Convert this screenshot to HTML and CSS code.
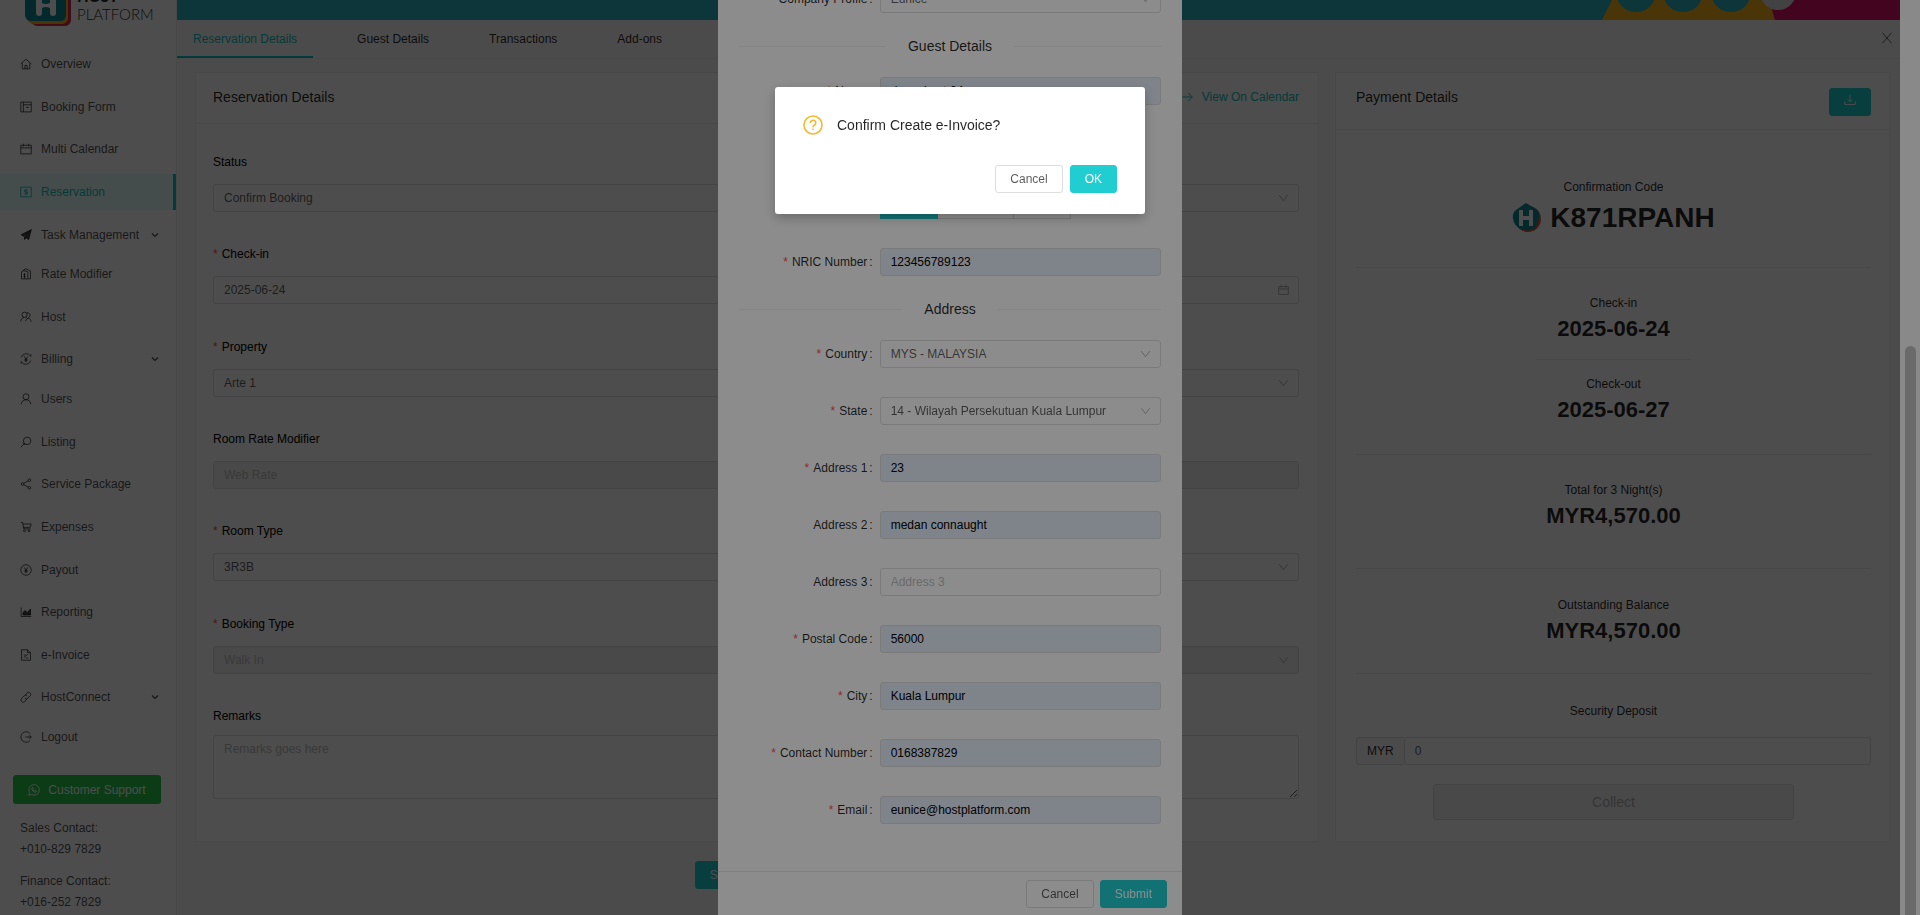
FILE: index.html
```html
<!DOCTYPE html>
<html lang="en">
<head>
  <meta charset="UTF-8">
  <title>Host Platform - Reservation</title>
  <meta name="viewport" content="width=device-width, initial-scale=1.0">
  <link rel="stylesheet" href="styles.css">
</head>
<body>

  <div class="layout">
    <aside class="sider">
      <div class="brand">
        <svg class="brand-mark" viewBox="0 0 48 28" width="48" height="28">
          <path d="M5 0h42v20a6 6 0 0 1-6 6H13a9 9 0 0 1-7-6z" fill="#e0234e"/>
          <path d="M3 0h41v18a6 6 0 0 1-6 6H10a8 8 0 0 1-7-5z" fill="#f5b21b"/>
          <path d="M1 0h41v16a5 5 0 0 1-5 5H7a6 6 0 0 1-6-6z" fill="#128a92"/>
          <path d="M12 0h6v3q4 2 8 0V0h6v13q0 3-3 3t-3-3V8q-4-2-8 0v5q0 3-3 3t-3-3z" fill="#fff"/>
        </svg>
        <div class="brand-text">
          <strong>HOST</strong>
          <span>PLATFORM</span>
        </div>
      </div>

      <ul class="menu">
        <li><a href="#"><svg class="icon" viewBox="0 0 16 16"><path d="M1 8l7-6.5L15 8M3 7v7.5h10V7M6.5 14.500V10h3v4.500"/></svg>Overview</a></li>
        <li><a href="#"><svg class="icon" viewBox="0 0 16 16"><path d="M1 1.500h14v13H1zM4.500 1.500v13M4.500 5H15M8 8.500h4"/></svg>Booking Form</a></li>
        <li><a href="#"><svg class="icon" viewBox="0 0 16 16"><path d="M1 3h14v11.500H1zM1 6.500h14M4.500 1v3.500M11.500 1v3.500"/></svg>Multi Calendar</a></li>
        <li class="active"><a href="#"><svg class="icon" viewBox="0 0 16 16"><path d="M1 1.500h14v13H1zM8 4v8M10 5.500H7a1.200 1.200 0 0 0 0 2.500h2a1.200 1.200 0 0 1 0 2.500H6"/></svg>Reservation</a></li>
        <li class="submenu"><a href="#"><svg class="icon" viewBox="0 0 16 16"><path d="M15 1L1.500 7.500l3 2zM15 1L6 10v4l2-2.500 3.500 2.500z" fill="currentColor"/></svg>Task Management<svg class="arrow" viewBox="0 0 8 8"><path d="M1 2.500l3 3 3-3"/></svg></a></li>
        <li><a href="#"><svg class="icon" viewBox="0 0 16 16"><path d="M5 4V2.500L8 1l6 3v10.500h-3M2 5l3-1.500L10.500 5v9.500H2zM4.500 8.500h3M4.500 11.500h3M6 7v7"/></svg>Rate Modifier</a></li>
        <li><a href="#"><svg class="icon" viewBox="0 0 16 16"><circle cx="6" cy="5" r="3.500"/><path d="M1 14c0-3 2-5 4.500-5.500M8 8.500l2 1.500M15 14.500c-.5-3-2-4.500-4-5-2 .5-3 2-3.500 4M9 2.500a3.300 3.300 0 0 1 2 6.500"/></svg>Host</a></li>
        <li class="submenu"><a href="#"><svg class="icon" viewBox="0 0 16 16"><path d="M1.500 6a7 7 0 0 1 12.500-2M14.500 10a7 7 0 0 1-12.500 2M14.500 1.500V5M1.500 14.500V11M5.500 4.500L8 8l2.500-3.500M8 8v4M6 8.500h4M6 10.300h4"/></svg>Billing<svg class="arrow" viewBox="0 0 8 8"><path d="M1 2.500l3 3 3-3"/></svg></a></li>
        <li><a href="#"><svg class="icon" viewBox="0 0 16 16"><circle cx="8" cy="5" r="4"/><path d="M1.500 15C2 11.500 4.500 9 8 9s6 2.500 6.500 6"/></svg>Users</a></li>
        <li><a href="#"><svg class="icon" viewBox="0 0 16 16"><circle cx="9.500" cy="6.500" r="5"/><path d="M6 10l-5 5M4 9l3 3"/></svg>Listing</a></li>
        <li><a href="#"><svg class="icon" viewBox="0 0 16 16"><circle cx="3.500" cy="8" r="1.800"/><circle cx="12.500" cy="3" r="1.800"/><circle cx="12.500" cy="13" r="1.800"/><path d="M5 7l6-3.200M5 9l6 3.200"/></svg>Service Package</a></li>
        <li><a href="#"><svg class="icon" viewBox="0 0 16 16"><path d="M1 2h2.500l1.500 8.500h9M4 4h11l-1.500 4.500h-9"/><circle cx="6" cy="13" r="1.300"/><circle cx="12" cy="13" r="1.300"/></svg>Expenses</a></li>
        <li><a href="#"><svg class="icon" viewBox="0 0 16 16"><circle cx="8" cy="8" r="7"/><path d="M5.500 4.500L8 8l2.500-3.500M8 8v4M6 8.500h4M6 10.300h4"/></svg>Payout</a></li>
        <li><a href="#"><svg class="icon" viewBox="0 0 16 16"><path d="M1.500 2v12H15"/><path d="M4 12V8.500L7 6l2.500 3L14 4v8z" fill="currentColor"/></svg>Reporting</a></li>
        <li><a href="#"><svg class="icon" viewBox="0 0 16 16"><path d="M2 1h8l4 4v10H2zM10 1v4h4M5 11.500L10.500 7M5 8h2.500M8 12h3"/></svg>e-Invoice</a></li>
        <li class="submenu"><a href="#"><svg class="icon" viewBox="0 0 16 16"><path d="M7 5.500L10 2a3 3 0 0 1 4 4l-3.500 3.500a3 3 0 0 1-4 0M9 10.500L6.500 14A3 3 0 0 1 2 10l3.500-3.500a3 3 0 0 1 4 0"/></svg>HostConnect<svg class="arrow" viewBox="0 0 8 8"><path d="M1 2.500l3 3 3-3"/></svg></a></li>
        <li><a href="#"><svg class="icon" viewBox="0 0 16 16"><path d="M13.500 3.500a7 7 0 1 0 0 9M7 8h8M12.500 5.500L15 8l-2.500 2.500"/></svg>Logout</a></li>
      </ul>

      <div class="sider-footer">
        <a href="#" class="support">
          <svg class="icon" viewBox="0 0 16 16"><path d="M1 15l1-3.800A7 7 0 1 1 4.800 14zM5 5.500c0 3 2.500 5.500 5.500 5.500l1-1.500-2-1-1 1C7.500 9 7 8.500 6.500 7.500l1-1-1-2z"/></svg>
          Customer Support
        </a>
        <p>Sales Contact:<br>+010-829 7829</p>
        <p>Finance Contact:<br>+016-252 7829</p>
      </div>
    </aside>

    <main class="main">
      <div class="topbar">
        <svg viewBox="0 0 310 20" width="310" height="20">
          <path d="M22 0h170v20H12z" fill="#f5b21b"/>
          <path d="M179 0h131v20H185z" fill="#e0106c"/>
          <circle cx="46" cy="-8" r="20" fill="#28b4c4"/>
          <circle cx="93" cy="-8" r="20" fill="#28b4c4"/>
          <circle cx="141" cy="-8" r="20" fill="#28b4c4"/>
          <circle cx="188" cy="-8" r="18" fill="#ddd"/>
        </svg>
      </div>

      <nav class="tabs">
        <a href="#" class="active">Reservation Details</a>
        <a href="#">Guest Details</a>
        <a href="#">Transactions</a>
        <a href="#">Add-ons</a>
        <button type="button" class="close" aria-label="Close"><svg class="icon" viewBox="0 0 16 16"><path d="M2 1l12 14M14 1L2 15"/></svg></button>
      </nav>

      <div class="content">
        <section class="card reservation">
          <div class="card-head">
            <h2>Reservation Details</h2>
            <a href="#" class="view-link"><svg class="icon" viewBox="0 0 16 16"><path d="M1 8h14M9.500 2.500L15 8l-5.500 5.500"/></svg>View On Calendar</a>
          </div>
          <form class="details">
            <div class="field">
              <label for="status">Status</label>
              <div class="select">
                <select id="status"><option>Confirm Booking</option></select>
                <svg class="icon" viewBox="0 0 16 16"><path d="M2 4l6 8 6-8"/></svg>
              </div>
            </div>
            <div class="field">
              <label for="checkin" class="required">Check-in</label>
              <div class="select">
                <input id="checkin" type="text" value="2025-06-24">
                <svg class="icon" viewBox="0 0 16 16"><path d="M1 3h14v11.500H1zM1 6.500h14M4.500 1v3.500M11.500 1v3.500"/></svg>
              </div>
            </div>
            <div class="field">
              <label for="property" class="required">Property</label>
              <div class="select">
                <select id="property"><option>Arte 1</option></select>
                <svg class="icon" viewBox="0 0 16 16"><path d="M2 4l6 8 6-8"/></svg>
              </div>
            </div>
            <div class="field">
              <label for="modifier">Room Rate Modifier</label>
              <input id="modifier" type="text" value="Web Rate" disabled>
            </div>
            <div class="field">
              <label for="roomtype" class="required">Room Type</label>
              <div class="select">
                <select id="roomtype"><option>3R3B</option></select>
                <svg class="icon" viewBox="0 0 16 16"><path d="M2 4l6 8 6-8"/></svg>
              </div>
            </div>
            <div class="field">
              <label for="bookingtype" class="required">Booking Type</label>
              <div class="select">
                <select id="bookingtype" disabled><option>Walk In</option></select>
                <svg class="icon" viewBox="0 0 16 16"><path d="M2 4l6 8 6-8"/></svg>
              </div>
            </div>
            <div class="field remarks">
              <label for="remarks">Remarks</label>
              <textarea id="remarks" placeholder="Remarks goes here"></textarea>
            </div>
          </form>
        </section>

        <section class="card payment">
          <div class="card-head">
            <h2>Payment Details</h2>
            <button type="button" class="btn primary download" aria-label="Download"><svg class="icon" viewBox="0 0 16 16"><path d="M8 1v9M5 7.500L8 10.500l3-3M1 10v4h14v-4"/></svg></button>
          </div>
          <div class="payment-body">
            <div class="stat code">
              <span>Confirmation Code</span>
              <strong>
                <svg viewBox="0 0 30 30" width="30" height="30">
                  <circle cx="16" cy="16" r="13" fill="#e8552d"/>
                  <path d="M14 0l10 6q4 3 3 9-1 7-5 11-8 3-14 0-6-4-7-10-1-6 3-9z" fill="#128a92"/>
                  <path d="M7 7h4v6h6V7h4v16h-4v-6h-6v6H7z" fill="#fff"/>
                </svg>
                K871RPANH
              </strong>
            </div>
            <div class="stat-group">
              <div class="stat"><span>Check-in</span><strong>2025-06-24</strong></div>
              <hr>
              <div class="stat"><span>Check-out</span><strong>2025-06-27</strong></div>
            </div>
            <div class="stat amount"><span>Total for 3 Night(s)</span><strong>MYR4,570.00</strong></div>
            <div class="stat balance"><span>Outstanding Balance</span><strong>MYR4,570.00</strong></div>
            <div class="deposit">
              <label for="deposit">Security Deposit</label>
              <div class="addon">
                <span>MYR</span>
                <input id="deposit" type="text" value="0">
              </div>
              <button type="button" class="btn collect" disabled>Collect</button>
            </div>
          </div>
        </section>

        <div class="actions">
          <button type="button" class="btn primary">Save Reservation</button>
        </div>
      </div>
    </main>
  </div>

  <!-- e-Invoice form -->
  <div class="mask"></div>
  <div class="modal-wrap">
    <div class="modal" role="dialog" aria-label="e-Invoice">
      <form class="modal-body">
        <div class="rows">
          <div class="row">
            <label for="company">Company Profile</label>
            <div class="select">
              <select id="company"><option>Eunice</option></select>
              <svg class="icon" viewBox="0 0 16 16"><path d="M2 4l6 8 6-8"/></svg>
            </div>
          </div>
        </div>
        <h3 class="divider">Guest Details</h3>
        <div class="rows">
          <div class="row"><label for="name" class="required">Name</label><input id="name" class="filled" type="text" value="demo host 24"></div>
          <div class="row">
            <span class="row-label">ID Type</span>
            <div class="radios">
              <label><input type="radio" name="idtype" checked>NRIC</label>
              <label><input type="radio" name="idtype">Passport</label>
              <label><input type="radio" name="idtype">Army</label>
            </div>
          </div>
          <div class="row"><label for="nric" class="required">NRIC Number</label><input id="nric" class="filled" type="text" value="123456789123"></div>
        </div>
        <h3 class="divider">Address</h3>
        <div class="rows">
          <div class="row">
            <label for="country" class="required">Country</label>
            <div class="select">
              <select id="country"><option>MYS - MALAYSIA</option></select>
              <svg class="icon" viewBox="0 0 16 16"><path d="M2 4l6 8 6-8"/></svg>
            </div>
          </div>
          <div class="row">
            <label for="state" class="required">State</label>
            <div class="select">
              <select id="state"><option>14 - Wilayah Persekutuan Kuala Lumpur</option></select>
              <svg class="icon" viewBox="0 0 16 16"><path d="M2 4l6 8 6-8"/></svg>
            </div>
          </div>
          <div class="row"><label for="address1" class="required">Address 1</label><input id="address1" class="filled" type="text" value="23"></div>
          <div class="row"><label for="address2">Address 2</label><input id="address2" class="filled" type="text" value="medan connaught"></div>
          <div class="row"><label for="address3">Address 3</label><input id="address3" type="text" placeholder="Address 3"></div>
          <div class="row"><label for="postal" class="required">Postal Code</label><input id="postal" class="filled" type="text" value="56000"></div>
          <div class="row"><label for="city" class="required">City</label><input id="city" class="filled" type="text" value="Kuala Lumpur"></div>
          <div class="row"><label for="contact" class="required">Contact Number</label><input id="contact" class="filled" type="text" value="0168387829"></div>
          <div class="row"><label for="email" class="required">Email</label><input id="email" class="filled" type="email" value="eunice@hostplatform.com"></div>
        </div>
      </form>
      <div class="modal-footer">
        <button type="button" class="btn">Cancel</button>
        <button type="button" class="btn primary">Submit</button>
      </div>
    </div>
    <div class="scrollbar"><div class="thumb"></div></div>
  </div>

  <!-- confirmation -->
  <div class="mask"></div>
  <div class="confirm" role="alertdialog" aria-labelledby="confirm-title">
    <div class="confirm-title">
      <svg viewBox="0 0 20 20" width="20" height="20" fill="none" stroke="#f5b82e" stroke-width="1.600">
        <circle cx="10" cy="10" r="9"/>
        <path d="M7.200 8a2.800 2.600 0 1 1 4.400 2q-1.600 1-1.600 2.200"/>
        <circle cx="10" cy="14.300" r=".6" fill="#f5b82e" stroke-width=".6"/>
      </svg>
      <h2 id="confirm-title">Confirm Create e-Invoice?</h2>
    </div>
    <div class="confirm-btns">
      <button type="button" class="btn">Cancel</button>
      <button type="button" class="btn primary">OK</button>
    </div>
  </div>

</body>
</html>
```
FILE: styles.css
```css
* {
  box-sizing: border-box;
}

body {
  margin: 0;
  font-family: Helvetica, "Liberation Sans", Arial, sans-serif;
  font-size: 12px;
  line-height: 20px;
  color: rgba(0, 0, 0, 0.85);
  background: #fff;
  overflow: hidden;
}

a {
  color: inherit;
  text-decoration: none;
}

h2, h3, p, ul {
  margin: 0;
  padding: 0;
  font-weight: normal;
}

h2 {
  font-size: 14px;
}

.icon, .arrow {
  width: 12px;
  height: 12px;
  flex: none;
  fill: none;
  stroke: currentColor;
  stroke-width: 1.2;
}

.arrow {
  width: 8px;
  height: 8px;
  margin-left: auto;
}

/* form controls */
input, select, textarea {
  width: 100%;
  height: 28px;
  padding: 0 10px;
  font: inherit;
  color: rgba(0, 0, 0, 0.65);
  background: #fff;
  border: 1px solid #dedede;
  border-radius: 3px;
  appearance: none;
}

select:disabled, input:disabled {
  color: #bfbfbf;
  background: #f2f2f2;
  opacity: 1;
}

::placeholder {
  color: #bfbfbf;
}

input.filled {
  color: #000;
  background: #e8f0fe;
}

.select {
  position: relative;
}

.select .icon {
  position: absolute;
  top: 8px;
  right: 10px;
  width: 11px;
  color: #a6a6a6;
}

.required::before {
  content: "*";
  margin-right: 4px;
  color: #ff4d4f;
}

.btn {
  height: 28px;
  padding: 0 14px;
  font: inherit;
  color: rgba(0, 0, 0, 0.65);
  background: #fff;
  border: 1px solid #dedede;
  border-radius: 3px;
}

.btn.primary {
  color: #fff;
  background: #20ced2;
  border-color: #20ced2;
}

/* layout */
.layout {
  display: flex;
  height: 100vh;
  padding-right: 20px;
}

.sider {
  display: flex;
  flex-direction: column;
  width: 177px;
  border-right: 1px solid #f0f0f0;
}

.brand {
  display: flex;
  gap: 5px;
  height: 46px;
  padding-left: 24px;
  overflow: hidden;
}

.brand-text {
  display: flex;
  flex-direction: column;
  margin-top: -13px;
  font-family: Lato, sans-serif;
  font-size: 15px;
  line-height: 18px;
}

.brand-text strong {
  font-weight: 900;
}

.brand-text span {
  font-weight: 300;
}

.menu {
  flex: 1;
  display: flex;
  flex-direction: column;
  justify-content: space-between;
  list-style: none;
  color: rgba(0, 0, 0, 0.7);
}

.menu a {
  display: flex;
  align-items: center;
  gap: 9px;
  height: 36px;
  padding: 0 17px 0 20px;
}

.menu .submenu {
  margin-bottom: -3px;
}

.menu .active {
  color: #13c2c2;
  background: #e6fffb;
  border-right: 3px solid #13c2c2;
}

.sider-footer {
  height: 160px;
  padding: 20px 15px 0 13px;
  color: rgba(0, 0, 0, 0.7);
}

.support {
  display: flex;
  align-items: center;
  justify-content: center;
  gap: 8px;
  height: 29px;
  margin-bottom: 14px;
  color: #fff;
  background: #25c84c;
  border-radius: 3px;
}

.sider-footer p {
  margin: 0 7px 11px;
  line-height: 21px;
}

.main {
  flex: 1;
  display: flex;
  flex-direction: column;
  background: #fafafa;
}

.topbar {
  display: flex;
  justify-content: flex-end;
  height: 20px;
  background: #28b4c4;
}

.tabs {
  display: flex;
  gap: 28px;
  height: 39px;
  padding-right: 7px;
  border-bottom: 1px solid #f0f0f0;
}

.tabs a {
  padding: 9px 16px 0;
}

.tabs .active {
  color: #13c2c2;
  border-bottom: 2px solid #13c2c2;
}

.close {
  margin-left: auto;
  padding: 0;
  color: rgba(0, 0, 0, 0.65);
  background: none;
  border: 0;
}

.content {
  flex: 1;
  display: grid;
  grid-template-columns: 1fr 555px;
  grid-template-rows: 1fr auto;
  column-gap: 16px;
  padding: 13px 10px 0 18px;
}

.card {
  display: flex;
  flex-direction: column;
  background: #fff;
  border: 1px solid #f0f0f0;
}

.card-head {
  display: flex;
  justify-content: space-between;
  padding: 14px 19px 16px 17px;
  border-bottom: 1px solid #f0f0f0;
}

.payment .card-head {
  padding: 14px 18px 13px 20px;
}

.view-link {
  display: flex;
  align-items: center;
  gap: 9px;
  color: #13c2c2;
}

.details {
  flex: 1;
  display: flex;
  flex-direction: column;
  justify-content: space-between;
  padding: 28px 19px 42px 17px;
}

.field {
  display: flex;
  flex-direction: column;
  gap: 12px;
}

.field label {
  color: #000;
}

.field.remarks {
  gap: 9px;
}

textarea {
  display: block;
  height: 64px;
  padding: 3px 10px;
  resize: vertical;
}

.actions {
  height: 73px;
  padding-top: 19px;
  text-align: center;
}

/* payment column */
.download {
  margin-top: 1px;
}

.payment-body {
  flex: 1;
  padding: 47px 18px 0 20px;
  text-align: center;
}

.stat {
  display: flex;
  flex-direction: column;
  gap: 2px;
}

.stat strong {
  font-size: 22px;
  line-height: 28px;
}

.stat.code {
  gap: 3px;
  padding-bottom: 31px;
}

.stat.code strong {
  display: flex;
  justify-content: center;
  align-items: center;
  gap: 8px;
  font-size: 28px;
  line-height: 36px;
}

.stat-group {
  padding: 25px 0 30px;
  border-top: 1px solid #ececec;
  border-bottom: 1px solid #ececec;
}

.stat-group hr {
  width: 30%;
  margin: 16px auto 14px;
  border: 0;
  border-top: 1px solid #f0f0f0;
}

.stat.amount {
  padding: 25px 0 38px;
}

.stat.balance {
  padding: 26px 0 28px;
  border-top: 1px solid #ececec;
  border-bottom: 1px solid #ececec;
}

.deposit {
  display: flex;
  flex-direction: column;
  align-items: center;
  padding-top: 27px;
}

.addon {
  display: flex;
  width: 100%;
  margin: 16px 0 19px;
}

.addon span {
  padding: 3px 10px;
  background: #fafafa;
  border: 1px solid #dedede;
  border-right: 0;
  border-radius: 3px 0 0 3px;
}

.addon input {
  flex: 1;
}

.collect {
  width: 70%;
  height: 36px;
  font-size: 14px;
}

.collect:disabled {
  color: #b0b0b0;
  background: #f5f5f5;
}

/* overlays */
.mask {
  position: fixed;
  inset: 0;
  background: rgba(0, 0, 0, 0.45);
}

.modal-wrap {
  position: fixed;
  inset: 0;
  display: flex;
  align-items: flex-end;
  overflow: hidden;
}

.modal {
  width: 464px;
  margin: 0 auto;
  background: #fff;
}

.modal-body {
  padding: 21px 21px 47px;
}

.rows {
  display: flex;
  flex-direction: column;
  gap: 29px;
}

.row {
  display: grid;
  grid-template-columns: 1fr 2fr;
  align-items: center;
}

.row:has(.radios) {
  padding-top: 57px;
}

.row > label, .row-label {
  padding-right: 7px;
  text-align: right;
}

.row > label::after, .row-label::after {
  content: ":";
  margin-left: 2px;
}

.divider {
  display: flex;
  align-items: center;
  gap: 22px;
  margin: 22px 0 20px;
  font-size: 14px;
  line-height: 22px;
}

.divider::before, .divider::after {
  content: "";
  flex: 1;
  border-top: 1px solid #f0f0f0;
}

.radios {
  display: flex;
}

.radios label {
  height: 28px;
  padding: 3px 14px;
  border: 1px solid #dedede;
  border-left-width: 0;
}

.radios label:has(:checked) {
  color: #fff;
  background: #20ced2;
  border-color: #20ced2;
}

.radios input {
  position: absolute;
  width: 0;
  height: 0;
  opacity: 0;
}

.modal-footer {
  display: flex;
  justify-content: flex-end;
  gap: 6px;
  padding: 8px 15px 7px;
  border-top: 1px solid #e8e8e8;
}

.scrollbar {
  align-self: stretch;
  width: 20px;
  padding: 346px 4px 0 5px;
  background: #fafafa;
}

.thumb {
  height: 100%;
  background: #c1c1c1;
  border-radius: 6px 6px 0 0;
}

.confirm {
  position: fixed;
  top: 87px;
  left: 50%;
  width: 370px;
  padding: 28px 28px 21px;
  background: #fff;
  border-radius: 3px;
  box-shadow: 0 4px 12px rgba(0, 0, 0, 0.25);
  transform: translateX(-50%);
}

.confirm-title {
  display: flex;
  align-items: center;
  gap: 14px;
}

.confirm-btns {
  display: flex;
  justify-content: flex-end;
  gap: 7px;
  margin-top: 30px;
}
```
